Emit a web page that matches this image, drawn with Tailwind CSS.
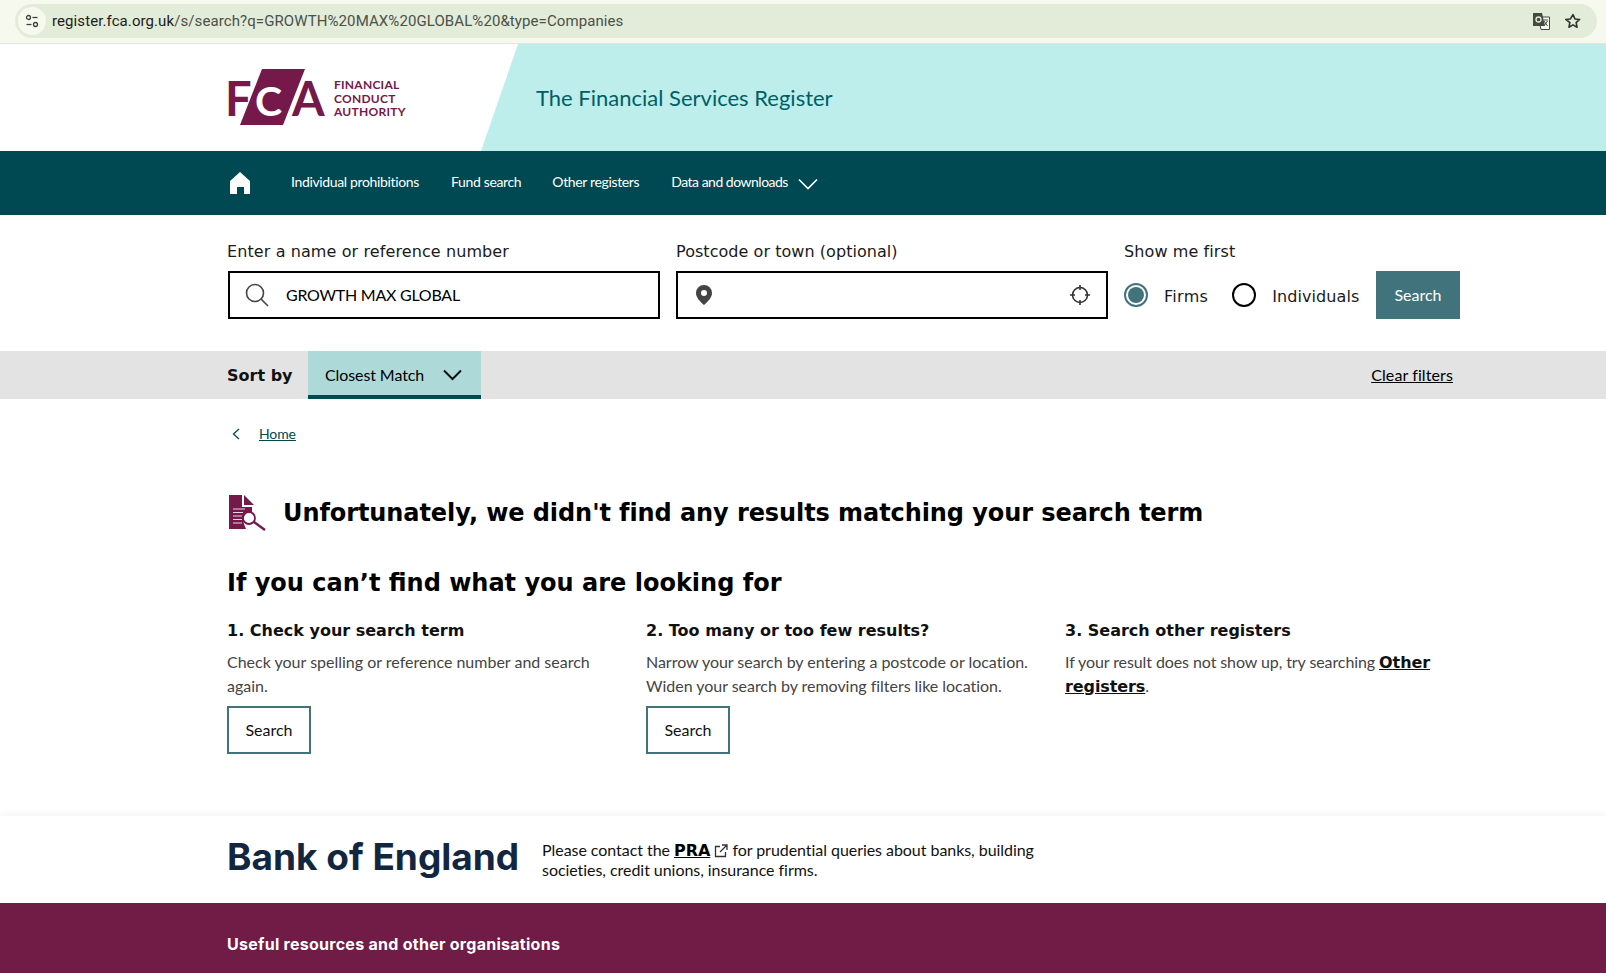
<!DOCTYPE html>
<html lang="en">
<head>
    <meta charset="UTF-8">
    <title>The Financial Services Register</title>
    <script src="https://cdn.jsdelivr.net/npm/@tailwindcss/browser@4"></script>
</head>
<body class="bg-white overflow-hidden h-[973px] font-['Lato',sans-serif] text-black">

    <!-- browser bar -->
    <div class="h-[44px] bg-[#f6f9ee] border-b border-[#e3e5da] pt-1 pl-[15px] pr-[9px]">
        <div class="h-[34px] rounded-full bg-[#e3ebd9] flex items-center pl-[3px] pr-[16px]">
            <div class="w-[28px] h-[28px] rounded-full bg-[#f6f9ee] flex items-center justify-center">
                <svg width="14" height="14" viewBox="0 0 14 14" fill="none" stroke="#3c4238" stroke-width="1.3"><circle cx="3.5" cy="3.5" r="2"/><path d="M7.5 3.5h5"/><circle cx="10.5" cy="10.5" r="2"/><path d="M1.5 10.5h5"/></svg>
            </div>
            <div class="ml-[6px] text-[15px] font-['Roboto',sans-serif] text-[#4b5148] tracking-[0.09px]"><span class="text-[#1d211b]">register.fca.org.uk</span>/s/search?q=GROWTH%20MAX%20GLOBAL%20&amp;type=Companies</div>
            <svg class="ml-auto" width="17" height="17" viewBox="0 0 17 17"><path d="M5 4h11.500v12.500H8z" fill="#f6f9ee" stroke="#444a41" stroke-width="1"/><path d="M0 0h9l3 13H0z" fill="#444a41"/><circle cx="5.500" cy="6.500" r="2.500" fill="none" stroke="#e3ebd9" stroke-width="1.300"/><path d="M10.500 7h4.500M11 13l3.500-5M11 8l3.500 5" stroke="#444a41" stroke-width="1"/></svg>
            <svg class="ml-[15px]" width="16" height="16" viewBox="0 0 24 24" fill="none" stroke="#2e332c" stroke-width="2.400" stroke-linejoin="round"><path d="M12 2.500l2.900 6.400 7 .8-5.200 4.700 1.400 6.900-6.100-3.500-6.100 3.500 1.400-6.900L1.100 9.700l7-.8z"/></svg>
        </div>
    </div>

    <!-- header -->
    <header class="h-[107px] flex">
        <div class="w-[481px] shrink-0 pl-[225px] pt-[25px]">
            <div class="flex">
                <svg width="102" height="56" viewBox="0 0 102 56" class="shrink-0" font-family="Lato">
                    <path d="M37 0h43L58 56H15z" fill="#75194a"/>
                    <text x="0" y="47" font-size="47" font-weight="700" fill="#75194a">F</text>
                    <text x="30" y="47" font-size="41" font-weight="700" fill="#fff">C</text>
                    <text x="67" y="47" font-size="47" font-weight="700" fill="#75194a">A</text>
                </svg>
                <div class="ml-[7px] mt-[9px] text-[12px] leading-[13.500px] tracking-[0.25px] font-bold text-[#75194a]">
                    <div>FINANCIAL</div>
                    <div>CONDUCT</div>
                    <div>AUTHORITY</div>
                </div>
            </div>
        </div>
        <div class="flex-1 bg-[#bdeeeb] [clip-path:polygon(37px_0,100%_0,100%_100%,0_100%)] flex items-center pl-[55px]">
            <span class="text-[22px] text-[#005f66]">The Financial Services Register</span>
        </div>
    </header>

    <!-- nav -->
    <nav class="h-[64px] bg-[#004852] pl-[230px] pb-[3px] flex items-center text-white text-[14px] tracking-[-0.35px]">
        <svg class="mt-[3px]" width="20" height="22" viewBox="0 0 20 22" fill="#fff"><path d="M10 0l10 9v13h-6v-7H7v7H0V9z"/></svg>
        <a class="ml-[41px]">Individual prohibitions</a>
        <a class="ml-[32px]">Fund search</a>
        <a class="ml-[31px]">Other registers</a>
        <a class="ml-[32px] tracking-[-0.5px]">Data and downloads</a>
        <svg class="ml-[10px] mt-[5px]" width="20" height="12" viewBox="0 0 20 12" fill="none" stroke="#fff" stroke-width="1.600"><path d="M1 1.500l9 9 9-9"/></svg>
    </nav>

    <!-- search form -->
    <section class="h-[136px] pl-[227px] pt-[27px] flex font-['DejaVu_Sans',sans-serif] text-[16px] text-[#1a1a1a]">
        <div class="w-[433px]">
            <div class="leading-[20px] tracking-[0.1px]">Enter a name or reference number</div>
            <div class="mt-[9px] ml-[1px] h-[48px] border-2 border-black flex items-center pl-[14px]">
                <svg width="26" height="26" viewBox="0 0 26 26" fill="none" stroke="#444" stroke-width="1.600"><circle cx="11" cy="11" r="8.500"/><path d="M17 17l7 7"/></svg>
                <span class="ml-[16px] font-['Lato',sans-serif] text-[16px] tracking-[-0.25px] text-black">GROWTH MAX GLOBAL</span>
            </div>
        </div>
        <div class="w-[432px] ml-[16px]">
            <div class="leading-[20px] tracking-[0.05px]">Postcode or town (optional)</div>
            <div class="mt-[9px] h-[48px] border-2 border-black flex items-center pl-[18px] pr-[16px]">
                <svg width="16" height="20" viewBox="0 0 16 20" fill="#444"><path fill-rule="evenodd" d="M8 0a8 8 0 0 1 8 8c0 4.500-4 8.500-8 12-4-3.500-8-7.500-8-12a8 8 0 0 1 8-8zm0 5a3 3 0 1 0 0 6 3 3 0 0 0 0-6z"/></svg>
                <svg class="ml-auto" width="20" height="20" viewBox="0 0 20 20" fill="none" stroke="#333" stroke-width="1.600"><circle cx="10" cy="10" r="7.500"/><path d="M10 0v5M10 15v5M0 10h5M15 10h5"/></svg>
            </div>
        </div>
        <div class="ml-[16px]">
            <div class="leading-[20px] tracking-[0.1px]">Show me first</div>
            <div class="mt-[21px] flex items-center h-[24px]">
                <div class="w-[24px] h-[24px] rounded-full border-2 border-[#41737c] p-[2px]"><div class="w-full h-full rounded-full bg-[#41737c]"></div></div>
                <span class="ml-[16px] mt-[3px] tracking-[0.3px]">Firms</span>
                <div class="ml-[24px] w-[24px] h-[24px] rounded-full border-2 border-black"></div>
                <span class="ml-[16px] mt-[3px] tracking-[0.08px]">Individuals</span>
            </div>
        </div>
        <button class="absolute left-[1376px] top-[271px] w-[84px] h-[48px] bg-[#41737c] text-white font-['Lato',sans-serif] text-[16px]">Search</button>
    </section>

    <!-- sort bar -->
    <div class="h-[48px] bg-[#e3e3e3] pl-[227px] flex">
        <div class="w-[81px] font-['DejaVu_Sans',sans-serif] font-bold text-[16px] leading-[49px] text-[#111]">Sort by</div>
        <div class="w-[173px] bg-[#addad9] border-b-[4px] border-[#004852] flex items-center pl-[17px] pt-[3px] text-[16px] tracking-[-0.1px]">
            Closest Match
            <svg class="ml-[19px]" width="19" height="12" viewBox="0 0 19 12" fill="none" stroke="#111" stroke-width="2"><path d="M1 1.500l8.500 8.500 8.500-8.500"/></svg>
        </div>
        <a class="ml-auto mr-[153px] underline text-[16px] leading-[47px] tracking-[0.1px]">Clear filters</a>
    </div>

    <!-- results -->
    <main class="pl-[227px] w-[1460px]">
        <div class="h-[24px] mt-[23px] flex items-center">
            <svg class="ml-[5px]" width="8" height="12" viewBox="0 0 8 12" fill="none" stroke="#004852" stroke-width="1.300"><path d="M7 1L1.500 6 7 11"/></svg>
            <a class="ml-[19px] mb-[2px] text-[14px] underline text-[#004852] tracking-[-0.1px]">Home</a>
        </div>

        <div class="flex items-center mt-[47px] h-[40px]">
            <svg class="ml-[2px]" width="38" height="36" viewBox="0 0 38 36">
                <path d="M0 0h13v12h10v5a9 9 0 0 0-8 12l2 5H0z" fill="#75194a"/>
                <path d="M15 0l10 10H15z" fill="#75194a"/>
                <path d="M4 14h12M4 17.500h10M4 21h9M4 24.500h9M4 28h9" stroke="#e9d8e1" stroke-width="1"/>
                <circle cx="20" cy="23" r="6" fill="#fff" stroke="#75194a" stroke-width="1.800"/>
                <path d="M25 27l11 8" stroke="#75194a" stroke-width="2.400"/>
            </svg>
            <h1 class="ml-[16px] font-['DejaVu_Sans',sans-serif] font-bold text-[24px] tracking-[-0.08px] text-black">Unfortunately, we didn't find any results matching your search term</h1>
        </div>

        <h2 class="mt-[32px] font-['DejaVu_Sans',sans-serif] font-bold text-[24px] leading-[36px] text-black">If you can’t find what you are looking for</h2>

        <div class="grid grid-cols-[419px_419px_1fr] mt-[18px]">
            <div>
                <h3 class="font-['DejaVu_Sans',sans-serif] font-bold text-[16px] leading-[24px] text-[#111]">1. Check your search term</h3>
                <p class="mt-[7px] w-[375px] text-[16px] leading-[24px] text-[#444]">Check your spelling or reference number and search again.</p>
                <button class="mt-[8px] w-[84px] h-[48px] border-2 border-[#41737c] text-[16px] text-[#111]">Search</button>
            </div>
            <div>
                <h3 class="font-['DejaVu_Sans',sans-serif] font-bold text-[16px] leading-[24px] text-[#111]">2. Too many or too few results?</h3>
                <p class="mt-[7px] w-[395px] text-[16px] leading-[24px] tracking-[-0.03px] text-[#444]">Narrow your search by entering a postcode or location. Widen your search by removing filters like location.</p>
                <button class="mt-[8px] w-[84px] h-[48px] border-2 border-[#41737c] text-[16px] text-[#111]">Search</button>
            </div>
            <div>
                <h3 class="font-['DejaVu_Sans',sans-serif] font-bold text-[16px] leading-[24px] text-[#111]">3. Search other registers</h3>
                <p class="mt-[7px] w-[380px] text-[16px] leading-[24px] tracking-[-0.09px] text-[#444]">If your result does not show up, try searching <a class="font-['DejaVu_Sans',sans-serif] font-bold text-[16px] leading-none underline text-[#111]">Other registers</a>.</p>
            </div>
        </div>
    </main>

    <!-- bank of england -->
    <section class="mt-[62px] h-[87px] pl-[227px] flex items-center shadow-[0_-3px_6px_rgba(0,0,0,0.04)]">
        <div class="w-[315px] -mt-[6px] text-[#12273f] font-['Inter',sans-serif] font-bold text-[37px] tracking-[0px] leading-[40px]">Bank of England</div>
        <p class="w-[500px] text-[16px] leading-[20px] tracking-[-0.05px] text-[#111]">Please contact the <a class="font-['DejaVu_Sans',sans-serif] font-bold underline text-[16px] leading-none text-black">PRA</a>
            <svg class="inline mb-[1px]" width="14" height="14" viewBox="0 0 14 14" fill="none" stroke="#333" stroke-width="1.300"><path d="M6 2.500H1.500v10h10V8M8 1h5v5M13 1L6 8"/></svg>
            for prudential queries about banks, building societies, credit unions, insurance firms.</p>
    </section>

    <!-- footer -->
    <footer class="h-[100px] bg-[#701c47] pl-[227px] pt-[31px] text-white font-['Inter',sans-serif] font-bold text-[16px] tracking-[0.27px] leading-[20px]">
        Useful resources and other organisations
    </footer>
</body>
</html>
